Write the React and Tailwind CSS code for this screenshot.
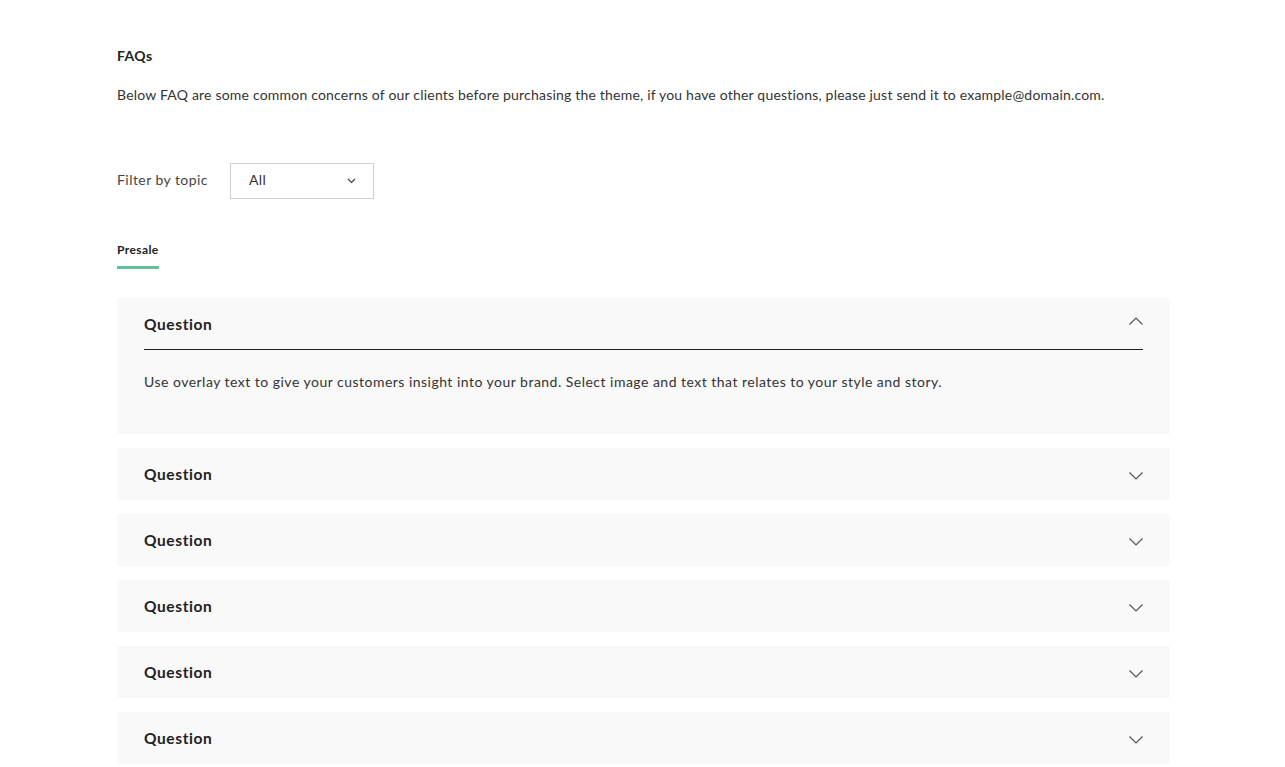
import { useState } from 'react'

const ANSWER = 'Use overlay text to give your customers insight into your brand. Select image and text that relates to your style and story.'
const ITEMS = Array.from({ length: 6 }, () => ({ q: 'Question', a: ANSWER }))

function Chevron({ up }) {
  return (
    <svg width="14" height="8" viewBox="0 0 14 8" fill="none" className="shrink-0">
      <path d={up ? 'M0.5 7.5L7 1L13.5 7.5' : 'M0.5 0.5L7 7L13.5 0.5'} stroke="#555" strokeWidth="1.2" />
    </svg>
  )
}

export default function App() {
  const [open, setOpen] = useState(0)

  return (
    <div className="min-h-screen bg-white text-[#222]" style={{ fontFamily: 'Lato, "Open Sans", sans-serif' }}>
      <div className="ml-[117px] w-[1053px] pt-[46px]">
        <h2 className="text-[14px] font-bold leading-5 tracking-[0.4px]">FAQs</h2>
        <p className="mt-[19px] text-[14px] leading-5 tracking-[0.2px] text-[#333]">
          Below FAQ are some common concerns of our clients before purchasing the theme, if you have other questions, please just send it to example@domain.com.
        </p>

        <div className="mt-[58px] flex items-center gap-[22px]">
          <span className="mb-[3px] text-[14px] tracking-[0.45px] text-[#444]">Filter by topic</span>
          <button className="flex h-[36px] w-[144px] items-center justify-between border border-[#cfcfcf] pb-[3px] pl-[18px] pr-[17px] text-[14px] tracking-[0.4px] text-[#333]">
            All
            <svg width="9" height="6" viewBox="0 0 9 6" fill="none" className="mt-[2px]">
              <path d="M1 1L4.5 4.5L8 1" stroke="#444" strokeWidth="1.2" />
            </svg>
          </button>
        </div>

        <div className="mt-[37px]">
          <span className="inline-block border-b-[3px] border-[#62c198] pb-[8px] text-[12px] font-bold leading-4 tracking-[0.4px]">Presale</span>
        </div>

        <div className="mt-[29px] flex flex-col gap-[14px]">
          {ITEMS.map((item, i) => (
            <div key={i} className="bg-[#f9f9f9] px-[27px]">
              <button
                onClick={() => setOpen(open === i ? -1 : i)}
                className={`flex h-[52px] w-full items-center justify-between pt-[2px] text-left ${open === i ? 'border-b border-[#222]' : ''}`}
              >
                <span className="text-[15.5px] font-bold tracking-[0.6px]">{item.q}</span>
                <span className={open === i ? '-mt-[8px]' : 'mt-[2px]'}>
                  <Chevron up={open === i} />
                </span>
              </button>
              {open === i && (
                <p className="pt-[22px] pb-[42px] text-[14px] leading-5 tracking-[0.48px] text-[#333]">{item.a}</p>
              )}
            </div>
          ))}
        </div>
      </div>
    </div>
  )
}
